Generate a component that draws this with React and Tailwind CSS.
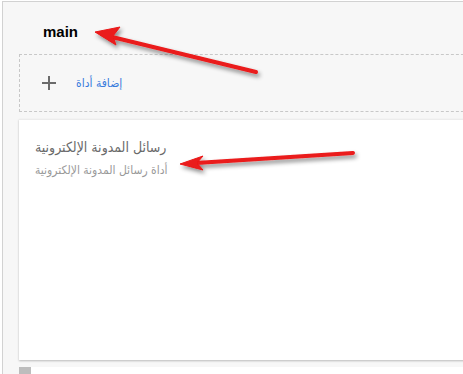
export default function App() {
  return (
    <div className="relative w-[463px] h-[374px] overflow-hidden bg-white pt-px pl-[2px] font-['Liberation_Sans','DejaVu_Sans',sans-serif]">
      <div className="h-full border-l border-t border-[#d2d2d2] bg-[#f7f7f7] pl-4 pt-[20px]">
        {/* Section title */}
        <div className="pl-6 h-[32px] text-[15px] font-semibold text-black leading-5">main</div>

        {/* Add widget */}
        <div className="w-[460px] h-[58px] border border-dashed border-[#c8c8c8] flex items-center pl-[21px] gap-[19px]">
          <svg width="16" height="16" viewBox="0 0 16 16" className="shrink-0">
            <path d="M8 1v14M1 8h14" stroke="#6b6b6b" strokeWidth="2" />
          </svg>
          <span dir="rtl" className="text-[12px] text-[#3b7ddd] font-['DejaVu_Sans_Condensed','DejaVu_Sans',sans-serif]">إضافة أداة</span>
        </div>

        {/* Widget card */}
        <div className="mt-[7px] w-[460px] h-[241px] bg-white border-t border-[#ececec] shadow-[0_1px_2px_rgba(0,0,0,0.25)] px-4 pt-[17px] font-['DejaVu_Sans_Condensed','DejaVu_Sans',sans-serif]">
          <div dir="rtl" className="w-fit text-[14px] leading-5 text-[#6a6a6a]">رسائل المدونة الإلكترونية</div>
          <div dir="rtl" className="mt-[5px] w-fit text-[12px] leading-4 text-[#9a9a9a]">أداة رسائل المدونة الإلكترونية</div>
        </div>

        {/* Next row */}
        <div className="mt-[7px] flex h-[10px]">
          <div className="w-[12px] h-full bg-[#bdbdbd]" />
          <div className="flex-1 h-full bg-white" />
        </div>
      </div>

      {/* Annotation arrows */}
      <svg className="absolute inset-0 pointer-events-none" width="463" height="374" viewBox="0 0 463 374">
        <defs>
          <filter id="sh" x="-20%" y="-50%" width="140%" height="200%">
            <feDropShadow dx="2" dy="3" stdDeviation="2" floodColor="#000" floodOpacity="0.45" />
          </filter>
        </defs>
        <g filter="url(#sh)" fill="#ea1a1a" stroke="#ea1a1a">
          <line x1="256" y1="72" x2="112" y2="37" strokeWidth="4" strokeLinecap="round" />
          <polygon points="95,32 120,27 113,36 116,45" strokeWidth="1" strokeLinejoin="round" />
          <line x1="353" y1="153" x2="196" y2="163" strokeWidth="4" strokeLinecap="round" />
          <polygon points="180,164 203,156 197,163 203,170" strokeWidth="1" strokeLinejoin="round" />
        </g>
      </svg>
    </div>
  );
}
